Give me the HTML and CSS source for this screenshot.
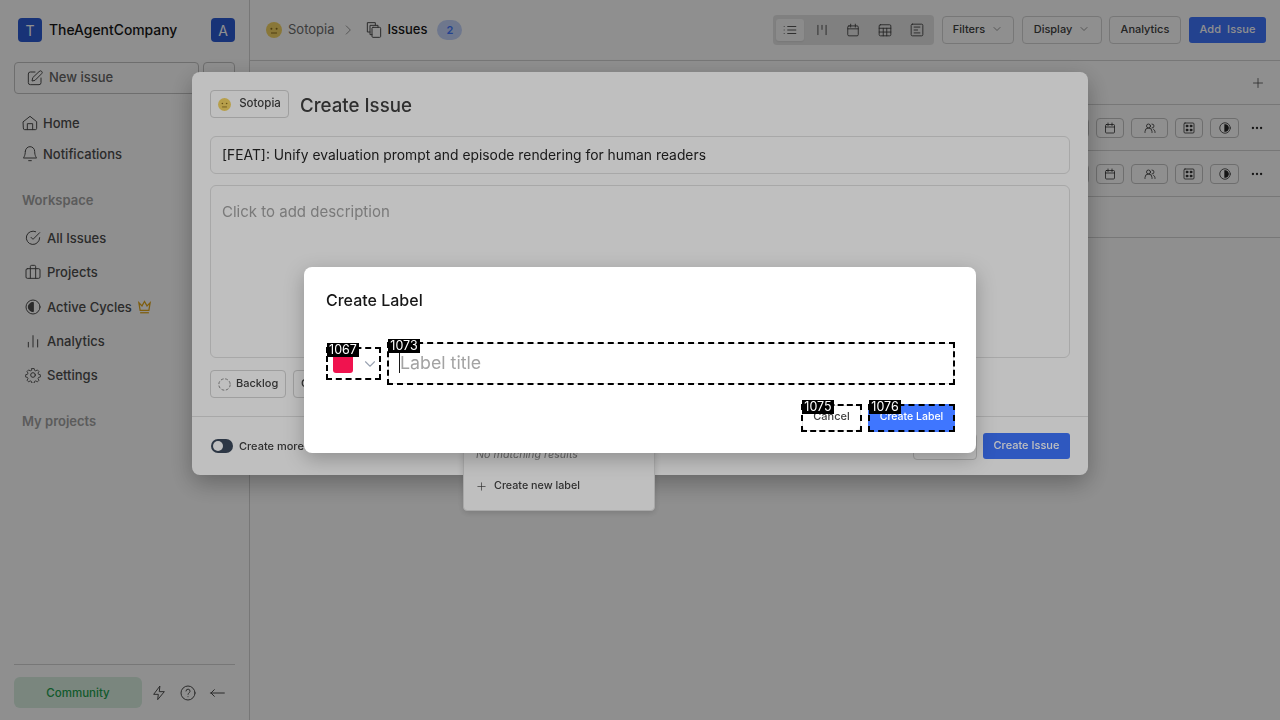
FILE: index.html
```html
<!DOCTYPE html>
<html lang="en">
<head>
    <meta charset="UTF-8">
    <title>Sotopia - Issues</title>
    <link rel="stylesheet" href="styles.css">
</head>
<body>
    <svg class="defs" width="0" height="0">
        <symbol id="face" viewBox="0 0 16 16">
            <circle cx="8" cy="8" r="8" fill="#f5d565"/>
            <circle cx="5.4" cy="6.8" r="1" fill="#8a6d1f"/>
            <circle cx="10.6" cy="6.8" r="1" fill="#8a6d1f"/>
            <path d="M5 11h6" stroke="#8a6d1f" stroke-width="1" fill="none"/>
        </symbol>
        <symbol id="chev" viewBox="0 0 24 24"><path d="M6 9l6 6 6-6"/></symbol>
        <symbol id="calendar" viewBox="0 0 24 24"><rect x="3" y="5" width="18" height="17" rx="2"/><path d="M16 2v5M8 2v5M3 10h18"/></symbol>
        <symbol id="users" viewBox="0 0 24 24"><circle cx="9" cy="8" r="4"/><path d="M2 21v-2a7 7 0 0 1 14 0v2M16 4a4 4 0 0 1 0 8M19 14.5a6 6 0 0 1 3 5v1.500"/></symbol>
        <symbol id="grid" viewBox="0 0 24 24"><rect x="2" y="2" width="20" height="20" rx="2"/><circle cx="8" cy="8" r="2" fill="currentColor"/><circle cx="16" cy="8" r="2" fill="currentColor"/><circle cx="8" cy="16" r="2" fill="currentColor"/><circle cx="16" cy="16" r="2" fill="currentColor"/></symbol>
        <symbol id="half" viewBox="0 0 24 24"><circle cx="12" cy="12" r="10.500"/><path d="M12 5a7 7 0 0 1 0 14z" fill="currentColor"/></symbol>
        <symbol id="dots" viewBox="0 0 24 24"><circle cx="5" cy="12" r="2" fill="currentColor" stroke="none"/><circle cx="12" cy="12" r="2" fill="currentColor" stroke="none"/><circle cx="19" cy="12" r="2" fill="currentColor" stroke="none"/></symbol>
    </svg>

    <div class="app">
        <aside class="sidebar">
            <div class="side-head">
                <span class="avatar">T</span>
                <span class="org-name">TheAgentCompany</span>
                <span class="avatar">A</span>
            </div>
            <div class="new-row">
                <button class="new-issue">
                    <svg class="ico" viewBox="0 0 24 24"><path d="M12 3H5a3 3 0 0 0-3 3v13a3 3 0 0 0 3 3h13a3 3 0 0 0 3-3v-7"/><path d="M18.500 2a2.300 2.300 0 0 1 3.500 3.500L12 15.500l-4.500 1 1-4.500z"/></svg>
                    <span class="btn-text">New issue</span>
                </button>
                <button class="new-more"></button>
            </div>
            <nav class="nav-top">
                <a class="nav-item">
                    <svg class="ico" viewBox="0 0 24 24"><path d="M2 10l10-8 10 8v10a2 2 0 0 1-2 2H4a2 2 0 0 1-2-2z"/><path d="M8 22v-9h8v9"/></svg>
                    Home
                </a>
                <a class="nav-item">
                    <svg class="ico" viewBox="0 0 24 24"><path d="M5 8a7 7 0 0 1 14 0c0 7 3 10 3 10H2s3-3 3-10"/><path d="M10 22h4"/></svg>
                    Notifications
                </a>
            </nav>
            <h4 class="side-label">Workspace</h4>
            <nav class="nav-work">
                <a class="nav-item">
                    <svg class="ico" viewBox="0 0 24 24"><path d="M22 11.500a10 10 0 1 1-6-9"/><path d="M9 11l3 3 10-10"/></svg>
                    All Issues
                </a>
                <a class="nav-item">
                    <svg class="ico" viewBox="0 0 24 24"><rect x="1.500" y="7" width="21" height="14.500" rx="2"/><path d="M16 21.500V4a2 2 0 0 0-2-2h-4a2 2 0 0 0-2 2v17.500"/></svg>
                    Projects
                </a>
                <a class="nav-item">
                    <svg class="ico" viewBox="0 0 24 24"><circle cx="12" cy="12" r="10.500"/><path d="M12 5a7 7 0 0 0 0 14z" fill="currentColor"/></svg>
                    Active Cycles
                    <svg class="crown" viewBox="0 0 24 24"><path d="M3 6l5 5 4-7 4 7 5-5-2 12H5z"/><path d="M5 22h14"/></svg>
                </a>
                <a class="nav-item">
                    <svg class="ico" viewBox="0 0 24 24"><path d="M5 21v-7M12 21V4M19 21v-11"/></svg>
                    Analytics
                </a>
                <a class="nav-item">
                    <svg class="ico" viewBox="0 0 24 24"><circle cx="12" cy="12" r="3.500"/><path d="M10 1.500h4l.6 3 2.200 1 2.600-1.700 2.800 2.800-1.700 2.600 1 2.200 3 .6v4l-3 .6-1 2.200 1.700 2.600-2.800 2.800-2.600-1.700-2.200 1-.6 3h-4l-.6-3-2.200-1-2.600 1.700-2.800-2.800 1.700-2.600-1-2.200-3-.6v-4l3-.6 1-2.200-1.700-2.600 2.800-2.800 2.600 1.700 2.200-1z" transform="translate(12 12) scale(.88) translate(-12 -12.500)"/></svg>
                    Settings
                </a>
            </nav>
            <h4 class="side-label projects-label">My projects</h4>
            <div class="side-foot">
                <span class="community">Community</span>
                <svg class="ico foot-ico" viewBox="0 0 24 24"><path d="M13 2L4 14h7l-1 8 10-12h-7z"/></svg>
                <svg class="ico foot-ico" viewBox="0 0 24 24"><circle cx="12" cy="12" r="10.500"/><path d="M9 9a3 3 0 0 1 6 .5c0 2-3 2.500-3 4.500"/><path d="M12 17.500h.01"/></svg>
                <svg class="ico foot-ico" viewBox="0 0 24 24"><path d="M23 12H2M8 7l-5 5 5 5"/></svg>
            </div>
        </aside>

        <main class="main">
            <header class="topbar">
                <svg class="emoji"><use href="#face"/></svg>
                <span class="crumb">Sotopia</span>
                <svg class="ico crumb-sep" viewBox="0 0 24 24"><path d="M9 5l7 7-7 7"/></svg>
                <svg class="ico layers" viewBox="0 0 24 24"><rect x="9" y="8" width="13" height="15" rx="1.500"/><path d="M9 19H6V5h12v3M6 15H2V1h12v4"/></svg>
                <span class="crumb-now">Issues</span>
                <span class="count">2</span>
                <div class="views">
                    <span class="view active"><svg class="ico" viewBox="0 0 24 24"><path d="M8 6h14M8 12h14M8 18h14M2 6h.01M2 12h.01M2 18h.01"/></svg></span>
                    <span class="view"><svg class="ico" viewBox="0 0 24 24"><path d="M5 4v16M12 4v7M19 4v16"/></svg></span>
                    <span class="view"><svg class="ico" viewBox="0 0 24 24"><use href="#calendar"/></svg></span>
                    <span class="view"><svg class="ico" viewBox="0 0 24 24"><rect x="2" y="3" width="20" height="19" rx="2"/><path d="M2 9h20M2 15.500h20M9 9v13M15 9v13"/></svg></span>
                    <span class="view"><svg class="ico" viewBox="0 0 24 24"><rect x="2" y="2" width="20" height="20" rx="2"/><path d="M7 7h10M7 12h6M7 17h10"/></svg></span>
                </div>
                <button class="tool filters">Filters <svg class="ico chev" viewBox="0 0 24 24"><use href="#chev"/></svg></button>
                <button class="tool display">Display <svg class="ico chev" viewBox="0 0 24 24"><use href="#chev"/></svg></button>
                <button class="tool analytics">Analytics</button>
                <button class="add-issue">Add&nbsp; Issue</button>
            </header>
            <div class="group-row">
                <svg class="ico plus" viewBox="0 0 24 24"><path d="M12 3v18M3 12h18"/></svg>
            </div>
            <div class="issue-row">
                <span class="chip"><svg class="ico" viewBox="0 0 24 24"><use href="#calendar"/></svg></span>
                <span class="chip"><svg class="ico" viewBox="0 0 24 24"><use href="#calendar"/></svg></span>
                <span class="chip wide"><svg class="ico" viewBox="0 0 24 24"><use href="#users"/></svg></span>
                <span class="chip"><svg class="ico" viewBox="0 0 24 24"><use href="#grid"/></svg></span>
                <span class="chip last"><svg class="ico" viewBox="0 0 24 24"><use href="#half"/></svg></span>
                <svg class="ico row-dots" viewBox="0 0 24 24"><use href="#dots"/></svg>
            </div>
            <div class="issue-row">
                <span class="chip"><svg class="ico" viewBox="0 0 24 24"><use href="#calendar"/></svg></span>
                <span class="chip"><svg class="ico" viewBox="0 0 24 24"><use href="#calendar"/></svg></span>
                <span class="chip wide"><svg class="ico" viewBox="0 0 24 24"><use href="#users"/></svg></span>
                <span class="chip"><svg class="ico" viewBox="0 0 24 24"><use href="#grid"/></svg></span>
                <span class="chip last"><svg class="ico" viewBox="0 0 24 24"><use href="#half"/></svg></span>
                <svg class="ico row-dots" viewBox="0 0 24 24"><use href="#dots"/></svg>
            </div>
            <div class="add-row"></div>
        </main>
    </div>

    <div class="backdrop issue-backdrop">
        <section class="issue-modal">
            <div class="issue-head">
                <button class="project-btn"><svg class="emoji small"><use href="#face"/></svg>Sotopia</button>
                <h2>Create Issue</h2>
            </div>
            <div class="issue-title">[FEAT]: Unify evaluation prompt and episode rendering for human readers</div>
            <div class="issue-desc">Click to add description</div>
            <div class="issue-props">
                <button class="prop">
                    <svg class="ico dashed-circle" viewBox="0 0 16 16"><circle cx="8" cy="8" r="7" stroke-dasharray="3.500 2"/></svg>
                    Backlog
                </button>
                <button class="prop">O</button>
            </div>
            <div class="issue-foot">
                <span class="toggle"><i></i></span>
                <span class="more-text">Create more</span>
                <button class="discard">Discard</button>
                <button class="create-issue">Create Issue</button>
            </div>
            <div class="label-menu">
                <p class="no-match">No matching results</p>
                <p class="new-label"><svg class="ico" viewBox="0 0 24 24"><path d="M12 4v16M4 12h16"/></svg>Create new label</p>
            </div>
        </section>
    </div>

    <div class="backdrop label-backdrop">
        <section class="label-modal">
            <h3>Create Label</h3>
            <div class="label-fields">
                <div class="color-pick mark">
                    <span class="tag">1067</span>
                    <span class="swatch"></span>
                    <svg class="ico color-chev" viewBox="0 0 24 24"><use href="#chev"/></svg>
                </div>
                <div class="label-input mark">
                    <span class="tag">1073</span>
                    <span class="caret"></span>Label title
                </div>
            </div>
            <div class="label-actions">
                <button class="cancel mark"><span class="tag">1075</span>Cancel</button>
                <button class="create-label mark"><span class="tag">1076</span>Create Label</button>
            </div>
        </section>
    </div>
</body>
</html>
```

FILE: styles.css
```css
* {
    box-sizing: border-box;
}
html, body {
    margin: 0;
    height: 100%;
    overflow: hidden;
}
body {
    font-family: 'Inter', 'Noto Sans', sans-serif;
    color: #171717;
    background-color: #ffffff;
}
button {
    font-family: inherit;
    background: none;
    cursor: pointer;
}
.defs {
    position: absolute;
}
.ico {
    width: 16px;
    height: 16px;
    flex: none;
    fill: none;
    stroke: currentColor;
    stroke-width: 1.5;
    stroke-linecap: round;
    stroke-linejoin: round;
}
.app {
    display: flex;
    height: 720px;
}

/* sidebar */
.sidebar {
    width: 250px;
    flex: none;
    display: flex;
    flex-direction: column;
    border-right: 1px solid #d4d4d4;
    padding: 18px 14px 12px 14px;
    color: #4d4d4d;
}
.side-head {
    display: flex;
    align-items: center;
    padding: 0 0 0 4px;
    gap: 7px;
    height: 24px;
}
.avatar {
    width: 24px;
    height: 24px;
    border-radius: 4px;
    background-color: #2c5bd4;
    color: #ffffff;
    font-size: 14px;
    display: flex;
    align-items: center;
    justify-content: center;
}
.org-name {
    flex: 1;
    font-size: 13.9px;
    font-weight: 500;
    color: #171717;
}
.new-row {
    display: flex;
    gap: 4px;
    margin-top: 20px;
}
.new-issue {
    width: 185px;
    height: 32px;
    border: 1px solid #c4c4c4;
    border-radius: 4px;
    display: flex;
    align-items: center;
    gap: 6px;
    padding: 0 12px;
    font-size: 13px;
    font-weight: 500;
    color: #666666;
}
.btn-text {
    margin-bottom: 3px;
}
.new-issue .ico {
    color: #4d4d4d;
}
.new-more {
    width: 32px;
    height: 32px;
    border: 1px solid #c4c4c4;
    border-radius: 4px;
}
.nav-top {
    margin-top: 13px;
    padding-left: 8px;
}
.nav-top .nav-item {
    height: 31px;
    gap: 5px;
}
.nav-item {
    display: flex;
    align-items: center;
    font-size: 13px;
    font-weight: 500;
    gap: 6px;
    height: 34.3px;
}
.side-label {
    margin: 23px 0 0 8px;
    font-size: 13px;
    font-weight: 600;
    line-height: 16px;
    color: #a3a3a3;
}
.nav-work {
    margin-top: 13px;
    padding-left: 11px;
}
.crown {
    width: 15px;
    height: 15px;
    margin-left: -1px;
    fill: none;
    stroke: #e2a81c;
    stroke-width: 2;
}
.projects-label {
    margin-top: 21px;
}
.side-foot {
    margin-top: auto;
    border-top: 1px solid #d4d4d4;
    padding-top: 12px;
    display: flex;
    align-items: center;
}
.community {
    width: 128px;
    height: 31px;
    flex: none;
    border-radius: 6px;
    background-color: #d9efe1;
    color: #22a04f;
    font-size: 11.5px;
    font-weight: 500;
    display: flex;
    align-items: center;
    justify-content: center;
    margin-right: 9px;
}
.foot-ico {
    margin-right: 13px;
}

/* main */
.main {
    flex: 1;
    min-width: 0;
}
.topbar {
    height: 61px;
    border-bottom: 1px solid #d4d4d4;
    display: flex;
    align-items: center;
    padding: 0 14px 0 16px;
}
.emoji {
    width: 16px;
    height: 16px;
    flex: none;
}
.crumb {
    margin: 0 0 2px 6px;
    font-size: 13px;
    color: #6b6b6b;
}
.crumb-sep {
    width: 14px;
    height: 14px;
    margin-left: 7px;
    color: #8a8a8a;
}
.layers {
    margin-left: 11px;
    color: #4d4d4d;
}
.crumb-now {
    margin: 0 0 2px 5px;
    font-size: 13px;
    font-weight: 500;
}
.count {
    margin-left: 10px;
    width: 25px;
    height: 20px;
    border-radius: 10px;
    background-color: #c4d4fc;
    color: #3f76ff;
    font-size: 11px;
    font-weight: 600;
    display: flex;
    align-items: center;
    justify-content: center;
}
.views {
    margin-left: auto;
    width: 161px;
    height: 30px;
    background-color: #e5e5e5;
    border-radius: 4px;
    display: flex;
    align-items: center;
    padding: 0 3px;
    gap: 4px;
}
.view {
    width: 28px;
    height: 22px;
    flex: 1;
    border-radius: 3px;
    display: flex;
    align-items: center;
    justify-content: center;
    color: #404040;
}
.view .ico {
    width: 14px;
    height: 14px;
}
.view.active {
    background-color: #f8f8f8;
    box-shadow: 0 1px 2px rgba(0, 0, 0, 0.08);
}
.tool {
    height: 28px;
    border: 1px solid #d4d4d4;
    border-radius: 4px;
    font-size: 11px;
    font-weight: 500;
    color: #404040;
    display: flex;
    align-items: center;
    justify-content: center;
    gap: 6px;
    padding: 0 0 2px;
}
.chev {
    width: 12px;
    height: 12px;
    color: #737373;
}
.filters {
    width: 72px;
    margin-left: 8px;
}
.display {
    width: 80px;
    margin-left: 8px;
}
.analytics {
    width: 72px;
    margin-left: 7px;
}
.add-issue {
    width: 77px;
    height: 26px;
    margin-left: 8px;
    border: none;
    border-radius: 3px;
    background-color: #3f76ff;
    color: #ffffff;
    font-size: 11px;
    font-weight: 500;
    letter-spacing: 0.1px;
    padding: 0 0 2px;
}
.group-row {
    height: 44px;
    border-bottom: 1px solid #d4d4d4;
    display: flex;
    align-items: center;
    justify-content: flex-end;
    padding-right: 16px;
    color: #404040;
}
.plus {
    width: 12px;
    height: 12px;
}
.issue-row {
    height: 46px;
    border-bottom: 1px solid #d4d4d4;
    display: flex;
    align-items: center;
    justify-content: flex-end;
    gap: 7px;
    padding-right: 16px;
    color: #262626;
}
.chip {
    width: 28px;
    height: 20px;
    border: 1px solid #c4c4c4;
    border-radius: 4px;
    display: flex;
    align-items: center;
    justify-content: center;
}
.chip.wide {
    width: 37px;
}
.chip.last {
    width: 29px;
}
.chip .ico {
    width: 12px;
    height: 12px;
}
.row-dots {
    width: 14px;
    height: 14px;
    margin-left: 4px;
}
.add-row {
    height: 41px;
    border-bottom: 1px solid #d4d4d4;
}

/* overlays */
.backdrop {
    position: fixed;
    inset: 0;
    background-color: rgba(0, 0, 0, 0.25);
    display: flex;
    justify-content: center;
}
.issue-backdrop {
    padding-top: 72px;
}
.label-backdrop {
    align-items: center;
}

/* create issue modal */
.issue-modal {
    position: relative;
    width: 896px;
    height: 403px;
    background-color: #ffffff;
    border-radius: 8px;
    box-shadow: 0 8px 24px rgba(0, 0, 0, 0.3);
    padding: 18px 18px 0;
    color: #262626;
}
.issue-head {
    display: flex;
    align-items: center;
    gap: 11px;
}
.issue-head h2 {
    margin: 2px 0 0;
    font-size: 18.7px;
    font-weight: 500;
    color: #404040;
}
.project-btn {
    width: 79px;
    height: 28px;
    border: 1px solid #d4d4d4;
    border-radius: 4px;
    display: flex;
    align-items: center;
    justify-content: center;
    gap: 8px;
    padding: 0 0 2px;
    font-size: 11.5px;
    font-weight: 500;
    color: #404040;
}
.emoji.small {
    width: 13px;
    height: 13px;
    margin-top: 2px;
}
.issue-title {
    margin-top: 18px;
    height: 38px;
    border: 1px solid #e0e0e0;
    border-radius: 6px;
    padding: 0 11px;
    display: flex;
    align-items: center;
    font-size: 13.85px;
}
.issue-desc {
    margin-top: 11px;
    height: 173px;
    border: 1px solid #e0e0e0;
    border-radius: 6px;
    padding: 16px 11px;
    font-size: 15px;
    line-height: 20px;
    color: #a3a3a3;
}
.issue-props {
    margin-top: 12px;
    display: flex;
    gap: 7px;
}
.prop {
    width: 76px;
    height: 28px;
    border: 1px solid #d4d4d4;
    border-radius: 4px;
    display: flex;
    align-items: center;
    gap: 5px;
    padding: 0 7px 2px;
    font-size: 11px;
    font-weight: 500;
    color: #404040;
}
.dashed-circle {
    width: 13px;
    height: 13px;
    margin-top: 2px;
    stroke-width: 1;
    color: #737373;
    stroke-linecap: butt;
}
.issue-foot {
    display: flex;
    align-items: center;
    margin: 18px -18px 0;
    height: 59px;
    border-top: 1px solid #e0e0e0;
    padding: 0 18px 0 19px;
}
.toggle {
    width: 22px;
    height: 14px;
    border-radius: 7px;
    background-color: #3d4a5c;
    display: flex;
    align-items: center;
    padding-left: 2px;
}
.toggle i {
    width: 10px;
    height: 10px;
    border-radius: 50%;
    background-color: #ffffff;
}
.more-text {
    margin-left: 6px;
    font-size: 11px;
    font-weight: 500;
    color: #404040;
}
.discard {
    margin-left: auto;
    width: 64px;
    height: 27px;
    border: 1px solid #d4d4d4;
    border-radius: 4px;
    font-size: 11px;
    color: #404040;
    padding: 0;
}
.create-issue {
    margin-left: 6px;
    width: 87px;
    height: 26px;
    border: none;
    border-radius: 3px;
    background-color: #3f76ff;
    color: #ffffff;
    font-size: 11px;
    font-weight: 500;
    padding: 0 0 2px;
}
.label-menu {
    position: absolute;
    left: 271px;
    top: 328px;
    width: 192px;
    height: 111px;
    background-color: #ffffff;
    border: 1px solid #e0e0e0;
    border-radius: 4px;
    box-shadow: 0 2px 6px rgba(0, 0, 0, 0.15);
    padding: 47px 12px 0;
    font-size: 10.75px;
}
.label-menu p {
    margin: 0;
}
.no-match {
    font-style: italic;
    color: #8a8a8a;
    line-height: 14px;
}
.label-menu .new-label {
    margin-top: 17px;
    display: flex;
    align-items: center;
    gap: 7px;
    line-height: 14px;
    font-weight: 500;
    color: #404040;
}
.new-label .ico {
    width: 11px;
    height: 11px;
}

/* create label modal */
.label-modal {
    width: 672px;
    height: 186px;
    background-color: #ffffff;
    border-radius: 8px;
    box-shadow: 0 6px 20px rgba(0, 0, 0, 0.25);
    padding: 23px 21px 0 22px;
}
.label-modal h3 {
    margin: 0;
    font-size: 16px;
    line-height: 20px;
    font-weight: 500;
    color: #171717;
}
/* dashed marks stay square, the thin field border underneath keeps its radius */
.mark {
    position: relative;
    isolation: isolate;
    outline: 2px dashed #000000;
    outline-offset: -2px;
    border: none;
}
.cancel::before,
.label-input::before {
    content: "";
    position: absolute;
    inset: 1px;
    z-index: -1;
    border: 1px solid #e5e5e5;
    border-radius: 4px;
}
.tag {
    position: absolute;
    left: 1px;
    top: -4px;
    z-index: 1;
    width: 32px;
    height: 14px;
    background-color: #000000;
    color: #ffffff;
    font-size: 12.5px;
    font-weight: 400;
    line-height: 14px;
    text-align: center;
}
.label-fields {
    margin-top: 32px;
    display: flex;
    align-items: flex-start;
    gap: 6px;
}
.color-pick {
    margin-top: 5px;
    width: 55px;
    height: 33px;
    display: flex;
    align-items: center;
    padding-left: 7px;
}
.swatch {
    width: 20px;
    height: 19px;
    border-radius: 3px;
    background-color: #f0134f;
}
.color-chev {
    width: 18px;
    height: 18px;
    margin-left: 8px;
    color: #9aa3b2;
}
.label-input {
    width: 568px;
    height: 43px;
    display: flex;
    align-items: center;
    padding: 0 0 2px 12px;
    font-size: 17.8px;
    color: #a3a3a3;
}
.label-input .tag {
    left: 1px;
    top: -3px;
}
.caret {
    width: 1px;
    height: 20px;
    background-color: #171717;
}
.label-actions {
    margin-top: 19px;
    display: flex;
    justify-content: flex-end;
    gap: 6px;
}
.cancel {
    width: 61px;
    height: 28px;
    font-size: 11px;
    font-weight: 500;
    color: #404040;
    padding: 0 0 5px;
}
.create-label {
    width: 87px;
    height: 28px;
    background-color: #3f76ff;
    color: #ffffff;
    font-size: 10.5px;
    font-weight: 500;
    padding: 0 0 3px;
}
```
